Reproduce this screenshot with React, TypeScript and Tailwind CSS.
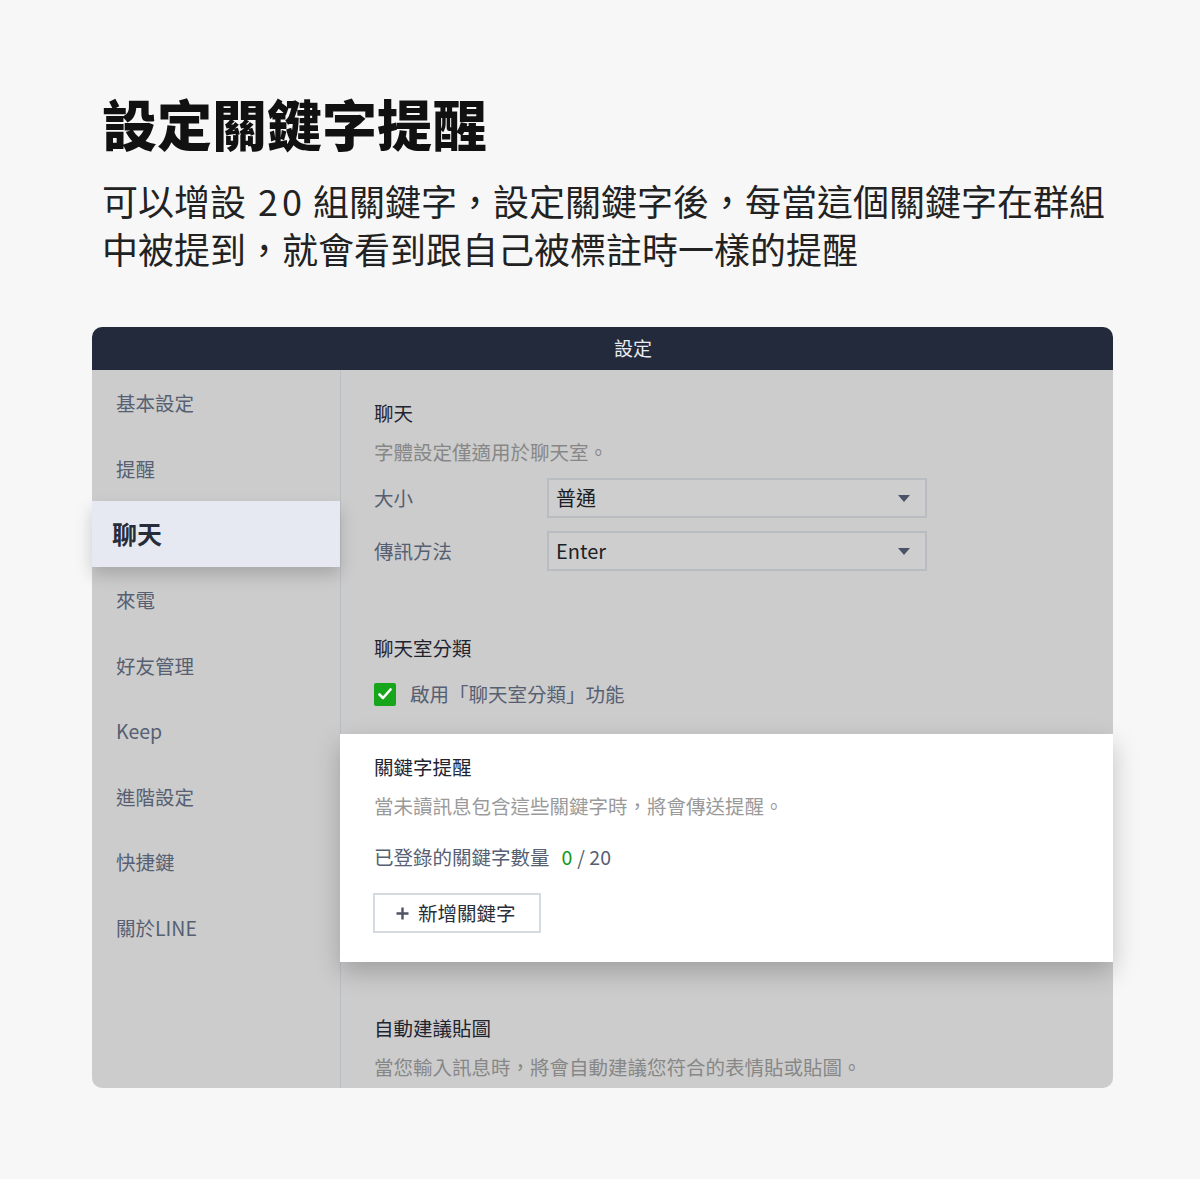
const FONT = "font-['Noto_Sans_CJK_TC','Noto_Sans',sans-serif]";

const menu = ['基本設定', '提醒', '聊天', '來電', '好友管理', 'Keep', '進階設定', '快捷鍵', '關於LINE'];

function Caret() {
  return (
    <svg width="12" height="7" viewBox="0 0 12 7" className="mr-[15px]">
      <path d="M0 0h12L6 7z" fill="#4b5466" />
    </svg>
  );
}

function SelectRow({ label, value, className }: { label: string; value: string; className: string }) {
  return (
    <div className={`flex h-[40px] items-center ${className}`}>
      <div className="w-[173px] text-[19.5px] text-[#566072]">{label}</div>
      <div className="flex h-[40px] w-[380px] items-center justify-between border-2 border-[#b9bcc1] bg-[#cecece]">
        <span className="pl-[7px] text-[20px] text-[#1c1f26]">{value}</span>
        <Caret />
      </div>
    </div>
  );
}

export default function App() {
  return (
    <div className={`min-h-[1179px] bg-[#f7f7f7] px-[92px] pt-[89px] ${FONT}`}>
      {/* 標題 */}
      <div className="pl-[10px]">
        <h1 className="text-[55px] font-black leading-[66px] text-[#111111]">設定關鍵字提醒</h1>
        <p className="mt-[21px] text-[36px] leading-[48px] text-[#222222]">
          可以增設<span className="ml-[12px] mr-[7px] tracking-[4px]">20</span>組關鍵字，設定關鍵字後，每當這個關鍵字在群組
          <br />
          中被提到，就會看到跟自己被標註時一樣的提醒
        </p>
      </div>

      {/* 設定視窗 */}
      <div className="mt-[55px] w-[1021px]">
        <div className="flex h-[43px] items-center justify-center rounded-t-[10px] bg-[#222a3b] pl-[61px] text-[19px] text-[#e9ebef]">
          設定
        </div>
        <div className="flex h-[718px]">
          {/* 側邊選單 */}
          <div className="w-[248px] shrink-0 rounded-bl-[10px] bg-[#cccccc]">
            {menu.map((item) =>
              item === '聊天' ? (
                <div
                  key={item}
                  className="relative z-10 flex h-[66px] items-center bg-[#e6e9f1] pl-[20px] text-[25px] font-bold text-[#262c3a] shadow-[0_8px_16px_rgba(0,0,0,0.18)]"
                >
                  {item}
                </div>
              ) : (
                <div key={item} className="flex h-[65.5px] items-center pl-[24px] text-[19.5px] text-[#566072]">
                  {item}
                </div>
              )
            )}
          </div>

          {/* 內容 */}
          <div className="flex-1 rounded-br-[10px] border-l border-[#babec5] bg-[#cccccc]">
            <div className="pl-[33px] pt-[28px]">
              <div className="text-[19.5px] leading-[30px] text-[#1f2430]">聊天</div>
              <div className="mt-[9px] text-[19.5px] leading-[30px] text-[#878787]">字體設定僅適用於聊天室。</div>
              <SelectRow label="大小" value="普通" className="mt-[11px]" />
              <SelectRow label="傳訊方法" value="Enter" className="mt-[13px]" />
              <div className="mt-[62px] text-[19.5px] leading-[30px] text-[#1f2430]">聊天室分類</div>
              <div className="mt-[16px] flex h-[30px] items-center gap-[14px]">
                <div className="flex h-[23px] w-[22px] items-center justify-center rounded-[2px] bg-[#17a51c]">
                  <svg width="14" height="12" viewBox="0 0 14 12">
                    <path d="M1.5 6.5l3.5 3.5 7.5-8.5" fill="none" stroke="#ffffff" strokeWidth="2.6" strokeLinecap="round" strokeLinejoin="round" />
                  </svg>
                </div>
                <span className="text-[19.5px] text-[#566072]">啟用「聊天室分類」功能</span>
              </div>
            </div>

            {/* 關鍵字提醒 */}
            <div className="relative z-10 mt-[25px] -ml-px h-[228px] bg-white pl-[34px] pt-[18px] shadow-[0_10px_24px_rgba(0,0,0,0.22)]">
              <div className="text-[19.5px] leading-[30px] text-[#1f2430]">關鍵字提醒</div>
              <div className="mt-[9px] text-[19.5px] leading-[30px] text-[#9a9a9a]">當未讀訊息包含這些關鍵字時，將會傳送提醒。</div>
              <div className="mt-[21px] flex h-[30px] items-center text-[19.5px] text-[#566072]">
                <span>已登錄的關鍵字數量</span>
                <span className="ml-[12px] text-[#139a16]">0</span>
                <span className="ml-[5px]">/ 20</span>
              </div>
              <div className="mt-[21px] -ml-px flex h-[40px] w-[168px] items-center border-2 border-[#d5d9e0] bg-white pl-[21px]">
                <svg width="13" height="13" viewBox="0 0 13 13">
                  <path d="M6.5 0.5v12M0.5 6.5h12" stroke="#4f5563" strokeWidth="2.4" />
                </svg>
                <span className="ml-[9px] text-[19.5px] text-[#2a2e38]">新增關鍵字</span>
              </div>
            </div>

            <div className="pl-[33px] pt-[51px]">
              <div className="text-[19.5px] leading-[30px] text-[#1f2430]">自動建議貼圖</div>
              <div className="mt-[9px] text-[19.5px] leading-[30px] text-[#878787]">
                當您輸入訊息時，將會自動建議您符合的表情貼或貼圖。
              </div>
            </div>
          </div>
        </div>
      </div>
    </div>
  );
}
